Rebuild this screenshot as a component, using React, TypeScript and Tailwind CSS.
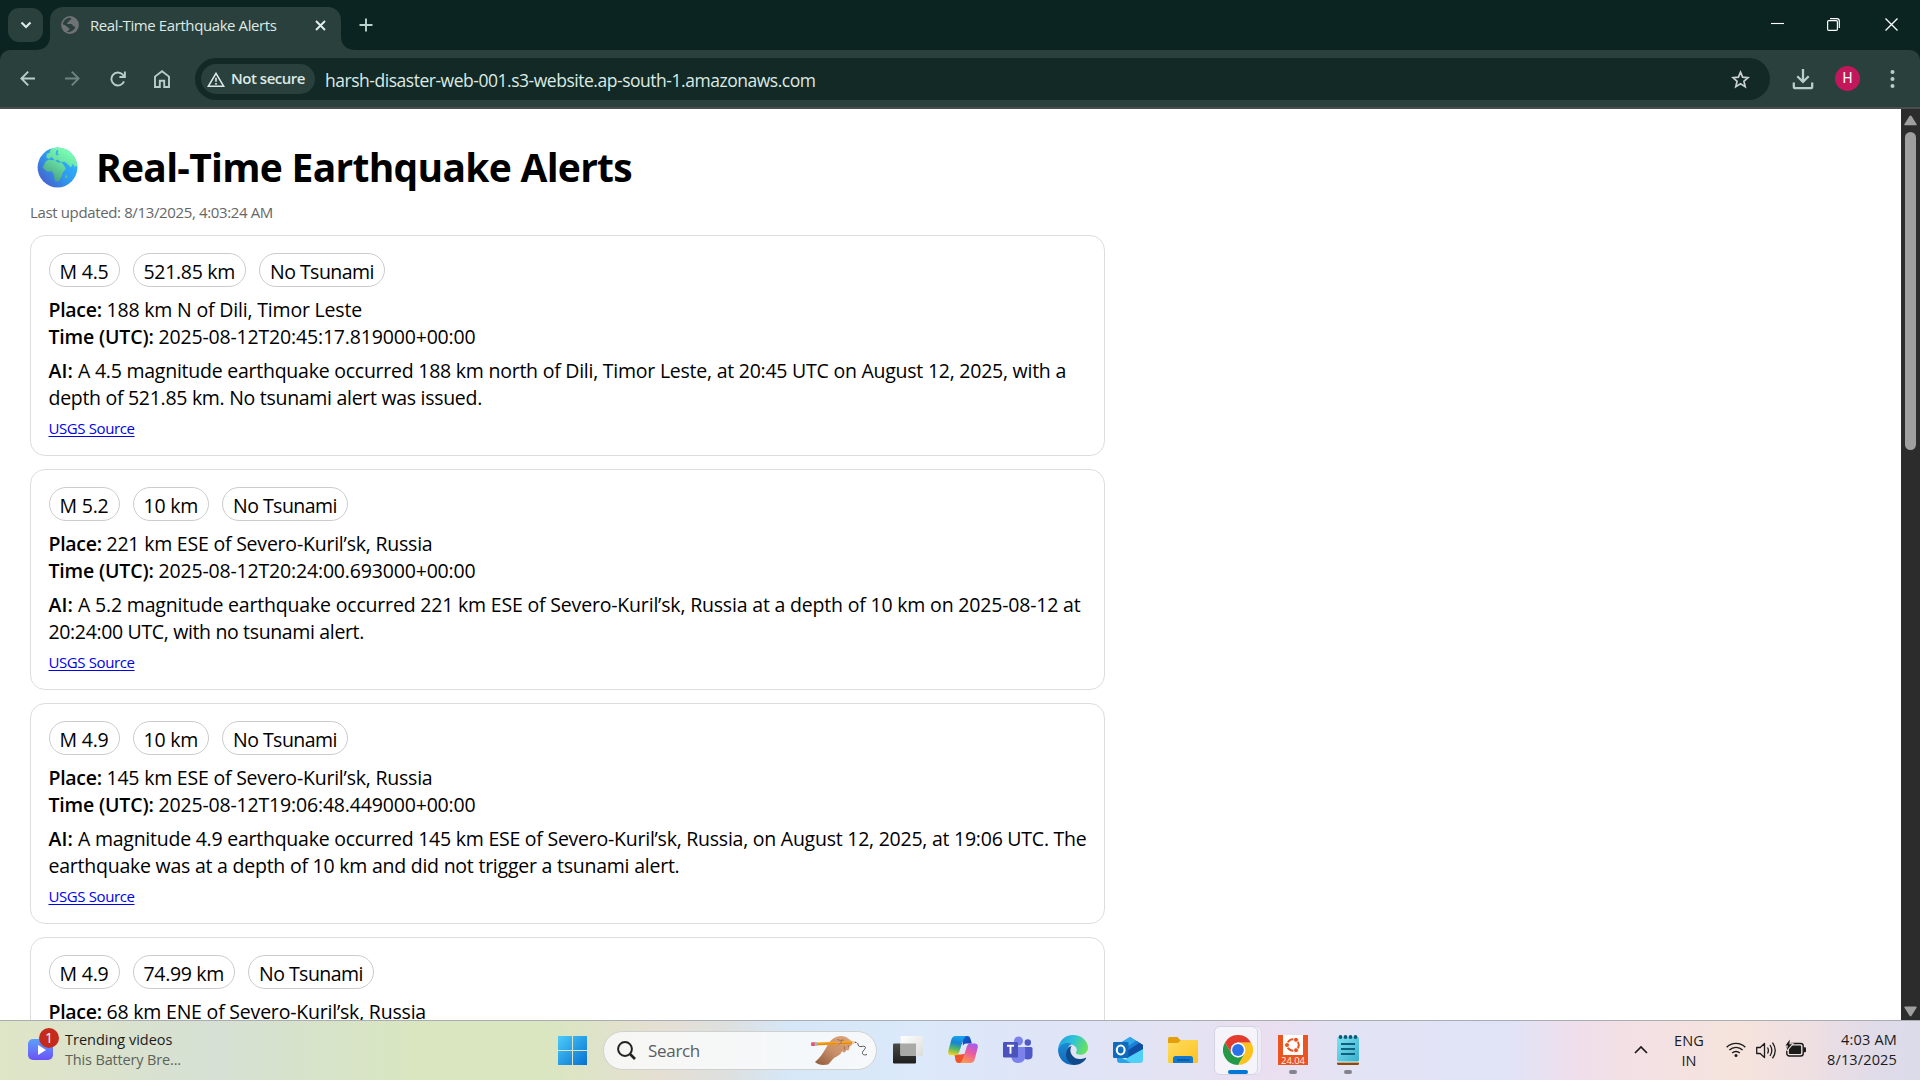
import { useLayoutEffect, useRef, useState, type ReactNode } from "react";

/* Text that is tracked so that it fills an exact advance width. */
function Fit({ w, className = "", children }: { w: number; className?: string; children: string }) {
  const ref = useRef<HTMLSpanElement>(null);
  const [spacing, setSpacing] = useState(0);
  useLayoutEffect(() => {
    const el = ref.current;
    if (!el) return;
    el.style.letterSpacing = "0px";
    const natural = el.getBoundingClientRect().width;
    const next = (w - natural) / children.length;
    el.style.letterSpacing = `${next}px`;
    setSpacing(next);
  }, [w, children]);
  return (
    <span ref={ref} className={`inline-block shrink-0 whitespace-pre ${className}`} style={{ letterSpacing: `${spacing}px` }}>
      {children}
    </span>
  );
}

type Seg = [string, number];
interface Quake {
  pills: Seg[];
  place: Seg;
  time?: Seg;
  ai?: Seg[];
}

const quakes: Quake[] = [
  {
    pills: [["M 4.5", 49], ["521.85 km", 91.5], ["No Tsunami", 104]],
    place: ["188 km N of Dili, Timor Leste", 255.5],
    time: ["2025-08-12T20:45:17.819000+00:00", 317],
    ai: [
      ["A 4.5 magnitude earthquake occurred 188 km north of Dili, Timor Leste, at 20:45 UTC on August 12, 2025, with a", 988],
      ["depth of 521.85 km. No tsunami alert was issued.", 433.5],
    ],
  },
  {
    pills: [["M 5.2", 49], ["10 km", 54.5], ["No Tsunami", 104]],
    place: ["221 km ESE of Severo-Kuril’sk, Russia", 326],
    time: ["2025-08-12T20:24:00.693000+00:00", 317],
    ai: [
      ["A 5.2 magnitude earthquake occurred 221 km ESE of Severo-Kuril’sk, Russia at a depth of 10 km on 2025-08-12 at", 1002.5],
      ["20:24:00 UTC, with no tsunami alert.", 315.5],
    ],
  },
  {
    pills: [["M 4.9", 49], ["10 km", 54.5], ["No Tsunami", 104]],
    place: ["145 km ESE of Severo-Kuril’sk, Russia", 326],
    time: ["2025-08-12T19:06:48.449000+00:00", 317],
    ai: [
      ["A magnitude 4.9 earthquake occurred 145 km ESE of Severo-Kuril’sk, Russia, on August 12, 2025, at 19:06 UTC. The", 1008.5],
      ["earthquake was at a depth of 10 km and did not trigger a tsunami alert.", 631],
    ],
  },
  {
    pills: [["M 4.9", 49], ["74.99 km", 80.5], ["No Tsunami", 104]],
    place: ["68 km ENE of Severo-Kuril’sk, Russia", 319.5],
  },
];

function Card({ q }: { q: Quake }) {
  return (
    <div className="mb-[13px] h-[221px] w-[1075px] shrink-0 rounded-[15px] border border-[#dddddd] pt-[17px] pl-[17.5px] text-[19.5px] leading-[27px] text-black">
      <div className="flex gap-[13px]">
        {q.pills.map(([t, w]) => (
          <div key={t} className="flex h-[34px] items-center rounded-full border border-[#cccccc] px-[10px] pt-[2px]">
            <Fit w={w}>{t}</Fit>
          </div>
        ))}
      </div>
      <div className="mt-[9px] flex">
        <Fit w={58} className="font-semibold">Place: </Fit>
        <Fit w={q.place[1]}>{q.place[0]}</Fit>
      </div>
      {q.time && (
        <div className="flex">
          <Fit w={110} className="font-semibold">Time (UTC): </Fit>
          <Fit w={q.time[1]}>{q.time[0]}</Fit>
        </div>
      )}
      {q.ai && (
        <>
          <div className="mt-[7px] flex">
            <Fit w={29.5} className="font-semibold">AI: </Fit>
            <Fit w={q.ai[0][1]}>{q.ai[0][0]}</Fit>
          </div>
          <div className="flex">
            <Fit w={q.ai[1][1]}>{q.ai[1][0]}</Fit>
          </div>
          <div className="mt-[7px] flex text-[15px] leading-5 text-[#0000ee]">
            <Fit w={86} className="underline decoration-1 underline-offset-2">USGS Source</Fit>
          </div>
        </>
      )}
    </div>
  );
}

function EarthEmoji() {
  return (
    <svg width="41" height="41" viewBox="0 0 41 41">
      <defs>
        <linearGradient id="sea" x1="0.9" y1="0.3" x2="0.2" y2="0.9">
          <stop offset="0" stopColor="#2fb4fb" />
          <stop offset="0.5" stopColor="#2f97f0" />
          <stop offset="1" stopColor="#4467cf" />
        </linearGradient>
        <linearGradient id="land" gradientUnits="userSpaceOnUse" x1="34" y1="4" x2="16" y2="34">
          <stop offset="0" stopColor="#7dffb5" />
          <stop offset="0.45" stopColor="#68dfa3" />
          <stop offset="1" stopColor="#47a183" />
        </linearGradient>
        <clipPath id="disc"><circle cx="20.5" cy="20.5" r="19.9" /></clipPath>
      </defs>
      <circle cx="20.5" cy="20.5" r="19.9" fill="url(#sea)" />
      <g clipPath="url(#disc)" fill="url(#land)" stroke="url(#land)" strokeWidth="0.8" strokeLinejoin="round">
        <path d="M15.900 0.700L31.400 1l9 11v6.600l-2.800.7-1.700-3.400-2.100 4.100-3.500-3.400-2.700-2.100h-4.200l-2.700-2.100-2.800.7-3.400-3.400-2.800 2-2-1.400.6-3.400 2.800-.7.700-3.400z" />
        <path d="M9 14.500l3.400-1.400 6.200.7 2.100 2.100h4.100l2.800 4.100.7 2-2.800 3.500-1.400 4.200-2.700 4.300h-3l-1.200-6.400-2-3.500H9.700l-3.500-3.400z" />
        <path d="M29 28.500l1 .500-.5 2-1-.5z" />
      </g>
      <path d="M18.500 6.500l1.200-3.500 1.600.5-.8 3 1.500 1-2.200 1z" fill="#38a9f4" />
    </svg>
  );
}

function Stroke({ size, vb, color, sw, children }: { size: [number, number]; vb?: string; color: string; sw: number; children: ReactNode }) {
  return (
    <svg width={size[0]} height={size[1]} viewBox={vb ?? `0 0 ${size[0]} ${size[1]}`} fill="none" stroke={color} strokeWidth={sw} className="shrink-0">
      {children}
    </svg>
  );
}

function TabStrip() {
  return (
    <div className="flex h-[50px] shrink-0 bg-[#0b2422] pl-2">
      <div className="mt-2 flex h-[34px] w-[35px] items-center justify-center rounded-[11px] bg-[#29403c]">
        <Stroke size={[12, 8]} color="#dfe9e6" sw={2.2}><path d="M1.500 1.500L6 6l4.500-4.500" /></Stroke>
      </div>
      <svg width="15" height="50" className="-ml-[8px] shrink-0"><path d="M15 35v15H0q15 0 15-15z" fill="#29403c" /></svg>
      <div className="mt-[7px] flex h-[43px] w-[291px] items-center rounded-t-[13px] bg-[#29403c] pb-[7px] pl-[11px] pr-[15px]">
        <svg width="18" height="18" viewBox="0 0 18 18" className="shrink-0">
          <circle cx="9" cy="9" r="8.900" fill="#6f7274" />
          <path d="M9.500 1.800C11 2.600 9.800 4.200 8.500 4.500 7.500 4.800 8 6 6.800 6.200 5.500 6.400 6 8 7 8h3.200c1.200 0 1.800 1 1.600 2 .6.300 1.800 0 2.300.8.300.9-.4 2-1.500 3C10 16.500 7 16.300 6 15.500c.7-1 2.500-1 2.500-2.600C8.500 11.500 6.500 12 6 10.700 5.500 9.500 3 9 1.800 8.200 2.200 4.600 5.500 1.500 9.500 1.800z" fill="#29403c" />
        </svg>
        <span className="-mt-px ml-[11px] text-[15px] leading-5 text-[#dfe9e6]"><Fit w={186.5}>Real-Time Earthquake Alerts</Fit></span>
        <div className="ml-auto"><Stroke size={[11, 11]} color="#e4efec" sw={1.9}><path d="M1 1l9 9M10 1l-9 9" /></Stroke></div>
      </div>
      <svg width="15" height="50" className="shrink-0"><path d="M0 35v15h15Q0 50 0 35z" fill="#29403c" /></svg>
      <div className="ml-[3px] mt-[18px]"><Stroke size={[14, 14]} color="#bcd3cd" sw={1.9}><path d="M7 0.500v13M0.500 7h13" /></Stroke></div>
      <div className="ml-auto flex h-[49px] items-center pr-[22px]">
        <Stroke size={[13, 13]} color="#ffffff" sw={1.1}><path d="M0 5.500h13" /></Stroke>
        <div className="ml-[43px]">
          <Stroke size={[13, 13]} color="#ffffff" sw={1.2}>
            <rect x="0.600" y="2.600" width="9.800" height="9.800" rx="1.200" />
            <path d="M3 0.700h7q2.300 0 2.300 2.300v7" />
          </Stroke>
        </div>
        <div className="ml-[45px]"><Stroke size={[13, 13]} color="#ffffff" sw={1.3}><path d="M0.500 0.500l12 12M12.500 0.500l-12 12" /></Stroke></div>
      </div>
    </div>
  );
}

function Toolbar() {
  const c = "#b6cfc8";
  return (
    <div className="shrink-0 bg-[#0b2422]">
      <div className="flex h-[59px] items-start rounded-t-[10px] border-b-2 border-[#4a4d4e] bg-[#29403c] pl-5">
        <div className="flex h-[57px] items-center">
          <Stroke size={[15, 15]} color={c} sw={1.9}><path d="M15 7.500H1.500M8.200 0.700L1.400 7.500l6.800 6.800" /></Stroke>
          <div className="ml-[30px]"><Stroke size={[15, 15]} color="#6c8580" sw={1.9}><path d="M0 7.500h13.500M6.800 0.700l6.800 6.800-6.800 6.800" /></Stroke></div>
          <div className="ml-[29.5px]">
            <Stroke size={[16, 16]} color={c} sw={1.9}>
              <path d="M14 10.300A6.500 6.500 0 1 1 12.800 3.700L14.700 5.600" />
              <path d="M14.900 0.500v5.500H9.400" />
            </Stroke>
          </div>
          <div className="ml-[28.5px]"><Stroke size={[16, 18]} color={c} sw={1.9}><path d="M1 17V6.600L8 1.200l7 5.400V17h-4.800v-6.300H5.800V17z" /></Stroke></div>
        </div>
        <div className="ml-[25px] mt-2 flex h-[42px] w-[1575px] items-center rounded-full bg-[#122926] pl-[6px] pr-[20px]">
          <div className="flex h-[30px] w-[114px] items-center rounded-full bg-[#29403c] pl-[6px]">
            <Stroke size={[18, 15]} color="#dce9e5" sw={1.6}>
              <path d="M1.400 14.200L9 1.400l7.600 12.800z" />
              <path d="M9 5.800v4M9 11v1.700" />
            </Stroke>
            <span className="-mt-[2px] ml-[6px] text-[15px] font-semibold leading-5 text-[#dce9e5]"><Fit w={74}>Not secure</Fit></span>
          </div>
          <span className="ml-[10px] mt-[2px] text-[17.5px] leading-6 text-[#dce9e5]"><Fit w={490.5}>harsh-disaster-web-001.s3-website.ap-south-1.amazonaws.com</Fit></span>
          <div className="ml-auto"><Stroke size={[19, 19]} color="#c8cfcd" sw={1.7}><path d="M9.500 2.200l2.100 5 5.400.5-4.100 3.600 1.300 5.300-4.700-2.900-4.700 2.900 1.300-5.300L2 7.700l5.400-.5z" /></Stroke></div>
        </div>
        <div className="flex h-[57px] items-center">
          <div className="ml-[22px]"><Stroke size={[22, 22]} color={c} sw={2.3}><path d="M11 1v12.500M5.300 8.200L11 13.800l5.700-5.600M1.800 14.500v4q0 1.700 1.700 1.700h15q1.700 0 1.700-1.700v-4" /></Stroke></div>
          <div className="ml-[21px] flex h-[25px] w-[25px] items-center justify-center rounded-full bg-[#c2185b] font-['Roboto'] text-[14px] text-white">H</div>
          <svg width="5" height="20" viewBox="0 0 5 20" fill={c} className="ml-[30px]"><circle cx="2.500" cy="3" r="2" /><circle cx="2.500" cy="10" r="2" /><circle cx="2.500" cy="17" r="2" /></svg>
        </div>
      </div>
    </div>
  );
}

function Scrollbar() {
  return (
    <div className="flex w-[19px] shrink-0 flex-col items-center bg-[#2c2c2c]">
      <svg width="13" height="11" className="mt-[6px] shrink-0" fill="#9f9f9f"><path d="M6.500 0.500q.6 0 1 .6l5 8q.6 1.200-.7 1.200H1.200Q-.1 10.300.5 9.100l5-8q.4-.6 1-.6z" /></svg>
      <div className="mt-[6px] h-[318px] w-[11px] shrink-0 rounded-full bg-[#9f9f9f]" />
      <svg width="13" height="11" className="mb-[3px] mt-auto shrink-0" fill="#9f9f9f"><path d="M6.500 10.300q-.6 0-1-.6l-5-8Q-.1.500 1.200.5h10.600q1.300 0 .7 1.200l-5 8q-.4.600-1 .6z" /></svg>
    </div>
  );
}

function Hand() {
  return (
    <svg width="60" height="31" viewBox="0 0 60 31" className="shrink-0">
      <defs>
        <linearGradient id="skin" x1="1" y1="0" x2="0" y2="1"><stop offset="0" stopColor="#e3ab82" /><stop offset="0.55" stopColor="#c68d66" /><stop offset="1" stopColor="#8d5a3b" /></linearGradient>
      </defs>
      <path d="M5 27c5-4 8-9 11-14 2-4 5-9 10-11 5-2 10-1 13 2 3 2 4 4 3 6l-3 2c1 3-1 4-3 3 0 3-3 3-4 1-1 4-5 5-8 7-3 3-4 5-6 6.500-5 1-10 .5-13-2.500z" fill="url(#skin)" />
      <path d="M5 7.500l37-1.500 4 1.200L42 9 5 10.500z" fill="#f7a823" />
      <path d="M5 9.500l37-1.400" stroke="#dd7f14" strokeWidth="1" />
      <path d="M1.500 7.200h3.800v3.800H1.500q-1.300-1.900 0-3.800z" fill="#e0566c" />
      <path d="M4.600 7.200h2.600v3.600H4.600z" fill="#a9b6bd" />
      <path d="M42 6l5 1.200L42 9z" fill="#ecc9a0" />
      <path d="M45 6.800l2.300.4-2.300.8z" fill="#333" />
      <path d="M25 4c4-3 10-2.500 13 1-3 .5-5 0-7 0 1 1 0 3-3 5-1-2-2-4-3-6z" fill="#d99f76" />
      <path d="M31 5c1 1.500-.5 3.500-3 5M34 11l1 4M38 10l1 2.500M27 4.500q3 1.500 7 .5" fill="none" stroke="#9a6340" strokeWidth="0.800" />
      <path d="M47.500 8c1 1 .2 3 2 3.500 2 .5 4-1 5.500.2 2 1.500-3.500 4.500-2.500 7 .8 1.700 3 1.300 4.500.8" fill="none" stroke="#555" strokeWidth="1" />
    </svg>
  );
}

function TaskView() {
  return (
    <svg width="30" height="30" viewBox="0 0 30 30">
      <defs>
        <linearGradient id="tvd" x1="0" y1="0" x2="0" y2="1"><stop offset="0" stopColor="#4a4a48" /><stop offset="1" stopColor="#1e1e1d" /></linearGradient>
        <linearGradient id="tvl" x1="0" y1="0" x2="1" y2="1"><stop offset="0" stopColor="#ffffff" /><stop offset="1" stopColor="#dcdcdc" /></linearGradient>
      </defs>
      <rect x="0" y="8.500" width="23" height="20" rx="1.200" fill="url(#tvd)" />
      <rect x="7.500" y="1" width="22.500" height="20" rx="1.200" fill="url(#tvl)" />
      <path d="M7.500 8.500H23V21H8.700q-1.200 0-1.200-1.200z" fill="#a9a9a8" />
    </svg>
  );
}

function Copilot() {
  return (
    <svg width="30" height="30" viewBox="0 0 30 30">
      <defs>
        <linearGradient id="cpa" x1="0.500" y1="0" x2="0.300" y2="1"><stop offset="0" stopColor="#1aa3ee" /><stop offset="0.350" stopColor="#1684d6" /><stop offset="0.650" stopColor="#4fb56b" /><stop offset="1" stopColor="#f2d21d" /></linearGradient>
        <linearGradient id="cpb" x1="0.700" y1="0" x2="0.300" y2="1"><stop offset="0" stopColor="#a65af0" /><stop offset="0.450" stopColor="#ea5aa0" /><stop offset="1" stopColor="#ff9a4d" /></linearGradient>
        <linearGradient id="cpc" x1="0" y1="0" x2="1" y2="1"><stop offset="0" stopColor="#1567d8" /><stop offset="1" stopColor="#0d3fae" /></linearGradient>
      </defs>
      <path d="M14 1h5.500q2 0 2.700 2l1.600 5.500H18q-2 0-3 2z" fill="url(#cpc)" />
      <path d="M6.500 19.500l1 6q.8 2.500 3 2.500H15l3-9.500-5 1z" fill="#f0542f" />
      <path d="M7.500 1H18q-2 1-3 4.500l-4 12Q10 20.200 7.500 20.200H3.300Q-.6 20.200.4 15.500L3.300 4.800Q4.300 1 7.500 1z" fill="url(#cpa)" />
      <path d="M22.500 28H12q2-1 3-4.500l4-12.500Q20 8.600 22.500 8.600h4.200q3.900 0 2.900 4.700l-2.900 10.900Q25.700 28 22.500 28z" fill="url(#cpb)" />
    </svg>
  );
}

function Teams() {
  return (
    <svg width="30" height="30" viewBox="0 0 30 30">
      <circle cx="15.500" cy="6" r="4.500" fill="#7b83eb" />
      <circle cx="24.800" cy="7.500" r="3.200" fill="#5059c9" />
      <path d="M20 12h8q1.500 0 1.500 1.500v6.500q0 4.500-4.700 4.500T20 20z" fill="#5059c9" />
      <path d="M8.500 12h12.300q1.400 0 1.400 1.400v7.600q0 7-7 7t-6.700-7z" fill="#7b83eb" />
      <rect x="0" y="7" width="15" height="15.500" rx="1.300" fill="#4b53bc" />
      <path d="M4 10.800h7M7.500 10.800v8" stroke="#fff" strokeWidth="1.900" />
    </svg>
  );
}

function Edge() {
  return (
    <svg width="30" height="30" viewBox="0 0 30 30">
      <defs>
        <linearGradient id="eda" x1="0" y1="0.300" x2="1" y2="0.600"><stop offset="0" stopColor="#1f9fe0" /><stop offset="0.450" stopColor="#2fc3d8" /><stop offset="1" stopColor="#6be25a" /></linearGradient>
        <linearGradient id="edb" x1="0.500" y1="0" x2="0.500" y2="1"><stop offset="0" stopColor="#1a8ad4" /><stop offset="1" stopColor="#1267ba" /></linearGradient>
      </defs>
      <path d="M0 14.500C.6 6 7 0 15 0c9 0 15 6.500 15 12.500 0 4.500-3.500 7.300-7.500 7.300-3.300 0-5-1.200-4.500-2.300 1-1.500 1-3.200.3-4.700C16 8.500 5 6.500 0 14.500z" fill="url(#eda)" />
      <path d="M0 14.500C2.500 8.500 9 6.500 14 9c-4 1.500-6 6-5 11 1 4.500 4 8 9 9.600C7.500 31.600 0 24 0 14.500z" fill="url(#edb)" />
      <path d="M13 12c-2.500 7 3.500 12.500 9 12.100 2.500 0 4.300-.8 5.500-1.300.6-.2.900.1.600.7C25.500 27.800 21 30 16.500 29.900 9 28.500 5.500 19 10 12.700q2-2.200 4-1.200-.7.100-1 .5z" fill="#114a8b" />
    </svg>
  );
}

function Outlook() {
  return (
    <svg width="30" height="30" viewBox="0 0 30 30">
      <path d="M5 9.500L17 2l13 8v6L17 24 5 16z" fill="#1a78cf" />
      <path d="M5 9.500L17 2l6.500 4L9 15z" fill="#31a8ea" />
      <path d="M23.500 6L30 10v4.500L14 24l-1-9z" fill="#0f4ea3" />
      <path d="M23.500 6l3 1.800L14 16v-4z" fill="#1b80d8" />
      <path d="M30 14V25q0 3-3 3H8l6-5z" fill="#4fd0f8" />
      <path d="M4 20l14 8H7q-3 0-3-3z" fill="#28a5e8" />
      <rect x="0" y="7" width="15.500" height="16" rx="1.300" fill="#0f6cbd" />
      <ellipse cx="7.700" cy="15" rx="3.900" ry="4.500" fill="none" stroke="#fff" strokeWidth="2.100" />
    </svg>
  );
}

function Explorer() {
  return (
    <svg width="30" height="30" viewBox="0 0 30 30">
      <defs><linearGradient id="fld" x1="0" y1="0" x2="1" y2="1"><stop offset="0" stopColor="#ffdc62" /><stop offset="1" stopColor="#fdc21f" /></linearGradient></defs>
      <path d="M0 3.500Q0 2 1.500 2h7.800l3 3H29q1 0 1 1v4H0z" fill="#e2a10a" />
      <path d="M0 8h10l3-3h16q1 0 1 1v21q0 1-1 1H1q-1 0-1-1z" fill="url(#fld)" />
      <path d="M5 28v-4.500Q5 21 7.500 21h15q2.500 0 2.500 2.500V28z" fill="#1279cf" />
      <path d="M9 25h12.500" stroke="#0a4f94" strokeWidth="1.400" />
    </svg>
  );
}

function Chrome() {
  return (
    <svg width="30" height="30" viewBox="0 0 30 30">
      <path d="M15 7.500h13a15 15 0 0 1-13 22.500l6.500-11.300z" fill="#fcc31e" />
      <path d="M2 7.500l6.500 11.300 6.500 3.700 6.500-3.700L15 30A15 15 0 0 1 2 7.500z" fill="#249a48" />
      <path d="M2 7.500A15 15 0 0 1 28 7.500H15l-6.500 3.700L8.500 18.700z" fill="#e33b2e" />
      <circle cx="15" cy="15" r="7.400" fill="#fff" />
      <circle cx="15" cy="15" r="5.900" fill="#2a72ea" />
    </svg>
  );
}

function Ubuntu() {
  return (
    <div className="relative h-[30px] w-[30px] bg-[#e95420]">
      <svg width="30" height="22" viewBox="0 0 30 22" className="block">
        <rect x="5" y="0" width="20" height="20" fill="#fff" />
        <circle cx="15" cy="10" r="5.800" fill="none" stroke="#e95420" strokeWidth="2.100" />
        <g fill="#e95420" stroke="#fff" strokeWidth="0.900">
          <circle cx="9" cy="10" r="2.500" />
          <circle cx="18" cy="4.800" r="2.500" />
          <circle cx="18" cy="15.200" r="2.500" />
        </g>
      </svg>
      <span className="absolute left-[3px] top-[21px] flex font-['Open_Sans'] text-[9.500px] leading-[10px] text-[#fff1ea]"><Fit w={24}>24.04</Fit></span>
    </div>
  );
}

function Notepad() {
  return (
    <svg width="22" height="30" viewBox="0 0 22 30">
      <defs><linearGradient id="npd" x1="0" y1="0" x2="1" y2="1"><stop offset="0" stopColor="#7ee2f2" /><stop offset="1" stopColor="#39afcf" /></linearGradient></defs>
      <path d="M0 26h22v2.500q0 1.500-1.500 1.500h-19Q0 30 0 28.500z" fill="#8a4a12" />
      <path d="M0 26h22v1.600H0z" fill="#f3efe8" />
      <rect x="0" y="2" width="22" height="24.500" rx="1.500" fill="url(#npd)" />
      <g fill="#0d5c77"><circle cx="3.500" cy="2" r="1.900" /><circle cx="8.500" cy="2" r="1.900" /><circle cx="13.500" cy="2" r="1.900" /><circle cx="18.500" cy="2" r="1.900" /></g>
      <path d="M4 9h14M4 14h14M4 19h14" stroke="#0f5f7d" strokeWidth="1.800" />
    </svg>
  );
}

function Taskbar() {
  return (
    <div className="flex h-[60px] shrink-0 items-start overflow-hidden border-t border-[#a9adb5] bg-[linear-gradient(90deg,#dfe5c6_0px,#d6e0d4_215px,#d9e6bf_420px,#d9e6bf_540px,#e5dfd3_660px,#dde0e0_730px,#d6e7f8_790px,#dbe9fa_920px,#dfe4f6_1060px,#e3e3f3_1180px,#eadff0_1270px,#e2e4f5_1360px,#e0e3f6_1510px,#efdfec_1570px,#f3e0e6_1620px,#f5e3dc_1740px,#eedfe2_1810px,#dfdbe9_1880px,#dcdbea_1920px)] text-[#1b1b1b]">
      <div className="relative ml-[28px] mt-[18px] flex h-[21px] w-[25px] items-center justify-center rounded-[5px] bg-gradient-to-b from-[#58a0ff] to-[#6a50f4]">
        <svg width="10" height="12" className="ml-[3px] mt-px"><path d="M1 1l8 5-8 5z" fill="#fff" /></svg>
        <span className="absolute -top-[11px] left-[11px] flex h-[20px] w-[20px] items-center justify-center rounded-full bg-[#c42b1c] text-[14px] leading-none text-white">1</span>
      </div>
      <div className="ml-[12px] mt-[9px] flex w-[493px] flex-col text-[14.500px] leading-5">
        <Fit w={107.5} className="self-start">Trending videos</Fit>
        <Fit w={116} className="self-start text-[#5d625a]">This Battery Bre...</Fit>
      </div>
      <svg width="29" height="29" viewBox="0 0 29 29" className="mt-[15px] shrink-0">
        <defs><linearGradient id="win" gradientUnits="userSpaceOnUse" x1="0" y1="0" x2="29" y2="29"><stop offset="0" stopColor="#4cccfa" /><stop offset="1" stopColor="#0670d2" /></linearGradient></defs>
        <path d="M0 0h14v14H0zM15 0h14v14H15zM0 15h14v14H0zM15 15h14v14H15z" fill="url(#win)" />
      </svg>
      <div className="ml-[16px] mt-[10px] flex h-[39px] w-[274px] shrink-0 items-center rounded-full border border-[#cfd1cf] bg-[#f8f9fa]/90 pl-[13px]">
        <Stroke size={[19, 19]} color="#222222" sw={2}><circle cx="8" cy="8" r="6.900" /><path d="M13 13l5 5" strokeWidth="2.600" /></Stroke>
        <span className="ml-[12px] mt-px text-[17px] leading-6 text-[#5a5c5e]"><Fit w={52}>Search</Fit></span>
        <div className="ml-auto mr-[6px]"><Hand /></div>
      </div>
      <div className="ml-[16px] mt-[14px] flex shrink-0 gap-[25px]">
        <TaskView />
        <Copilot />
        <Teams />
        <Edge />
        <Outlook />
        <Explorer />
      </div>
      <div className="ml-[16px] mt-[5px] h-[49px] w-[48px] shrink-0 rounded-[6px] border border-[#dcdae8] bg-[#eeedf7]">
        <div className="-ml-px -mt-px flex h-[49px] w-[44px] flex-col items-center rounded-[6px] border border-[#d6d4e4] bg-[#f6f4fb] pl-[4px] pr-0">
          <div className="mt-[8px] h-[30px]"><Chrome /></div>
          <div className="mt-[5px] h-1 w-5 rounded-full bg-[#0078d4]" />
        </div>
      </div>
      <div className="ml-[16px] mt-[14px] flex w-[30px] flex-col items-center">
        <Ubuntu />
        <div className="mt-[5px] h-1 w-2 rounded-full bg-[#84858c]" />
      </div>
      <div className="ml-[29px] mt-[14px] flex w-[22px] flex-col items-center">
        <Notepad />
        <div className="mt-[5px] h-1 w-2 rounded-full bg-[#84858c]" />
      </div>
      <div className="ml-auto mt-[24px]"><Stroke size={[14, 9]} color="#1b1b1b" sw={1.700}><path d="M1 8l6-6 6 6" /></Stroke></div>
      <div className="ml-[26px] mt-[10px] flex w-[30px] flex-col items-center text-[14.500px] leading-5">
        <Fit w={30}>ENG</Fit>
        <Fit w={15}>IN</Fit>
      </div>
      <div className="ml-[22px] mt-[20px]">
        <Stroke size={[20, 17]} color="#1b1b1b" sw={1.400}>
          <path d="M0.700 6.200a13.200 13.200 0 0 1 18.600 0M3.400 9.100a9.400 9.400 0 0 1 13.200 0M6.200 12a5.400 5.400 0 0 1 7.600 0" />
          <circle cx="10" cy="14.600" r="1.500" fill="#1b1b1b" stroke="none" />
        </Stroke>
      </div>
      <div className="ml-[10px] mt-[20px]">
        <Stroke size={[21, 19]} color="#1b1b1b" sw={1.300}>
          <path d="M0.700 6.500h3.500l4.300-4v14l-4.300-4H0.700z" strokeLinejoin="round" />
          <path d="M11.500 6.500q1.800 3 0 6M14 4q3.600 5.500 0 11M16.500 1.700q5.500 7.800 0 15.600" />
        </Stroke>
      </div>
      <div className="ml-[8px] mt-[18px]">
        <svg width="22" height="19" viewBox="0 0 22 19">
          <rect x="1.800" y="4.500" width="16.400" height="12.500" rx="2.500" fill="none" stroke="#1b1b1b" strokeWidth="1.400" />
          <rect x="3.900" y="6.600" width="12.200" height="8.300" rx="1" fill="#1b1b1b" />
          <path d="M18.600 8.300h1.400q1 0 1 1v2.900q0 1-1 1h-1.400z" fill="#1b1b1b" />
          <path d="M4.800 0.600L.5 6.600h2.400L1.600 11.500l5.400-6.300H4.400z" fill="#1b1b1b" stroke="#f3e2de" strokeWidth="2" />
          <path d="M4.800 0.600L.5 6.600h2.400L1.600 11.500l5.400-6.300H4.400z" fill="#1b1b1b" />
        </svg>
      </div>
      <div className="ml-[20px] mr-[23px] mt-[9px] flex w-[70px] flex-col items-end text-[14.500px] leading-5">
        <Fit w={56}>4:03 AM</Fit>
        <Fit w={70}>8/13/2025</Fit>
      </div>
    </div>
  );
}

export default function App() {
  return (
    <div className="flex h-[1080px] w-[1920px] flex-col overflow-hidden bg-white font-['Open_Sans','Noto_Sans',sans-serif]">
      <TabStrip />
      <Toolbar />
      <div className="flex min-h-0 flex-1">
        <main className="flex min-w-0 flex-1 flex-col overflow-hidden pl-[30px] pt-[31px]">
          <h1 className="flex h-[54px] shrink-0 items-center pl-[7px] text-[39px] font-bold leading-[54px] text-black">
            <EarthEmoji />
            <span className="ml-[18px]"><Fit w={536}>Real-Time Earthquake Alerts</Fit></span>
          </h1>
          <div className="mb-3 mt-[7px] flex h-[22px] shrink-0 text-[15px] leading-[22px] text-[#666666]">
            <Fit w={243}>Last updated: 8/13/2025, 4:03:24 AM</Fit>
          </div>
          {quakes.map((q) => (
            <Card key={q.place[0]} q={q} />
          ))}
        </main>
        <Scrollbar />
      </div>
      <Taskbar />
    </div>
  );
}
